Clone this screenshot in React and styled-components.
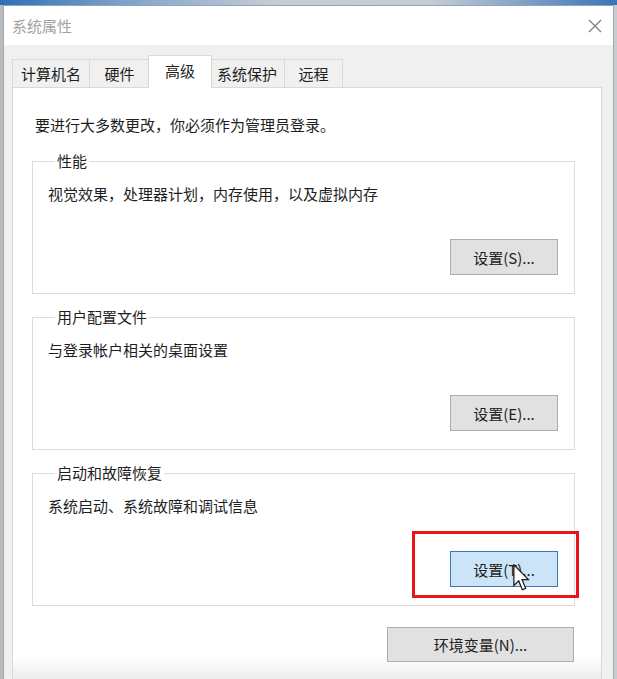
import React from "react";
import styled, {createGlobalStyle} from "styled-components";

const FONT = `"Noto Sans CJK SC", "Noto Sans", sans-serif`;

const Global = createGlobalStyle`
  html, body {
    margin: 0;
    padding: 0;
    overflow: hidden;
    background: #d6d6d6;
  }
  * { box-sizing: border-box; }
`;

const Screen = styled.div`
  width: 617px;
  height: 679px;
  padding: 5px 3px 0 3px;
  display: flex;
  background:
    linear-gradient(to right, #2f6fb5 0, #7fa2c8 20%, #c9cdd2 45%, #c7ccd2 70%, #3a74b8 100%) top / 100% 5px no-repeat,
    linear-gradient(to right, #b8bcc2 0 3px, #e4e4e4 3px, #e4e4e4 614px, #c8ccd2 614px);
  overflow: hidden;
`;

const Window = styled.div`
  flex: 1;
  display: flex;
  flex-direction: column;
  background: #f0f0f0;
  border-left: 1px solid #a8a8a8;
  border-right: 1px solid #a8a8a8;
  border-top: 1px solid #8aa6c6;
  font-family: ${FONT};
  color: #1e1e1e;
`;

const TitleBar = styled.div`
  height: 39px;
  background: #ffffff;
  display: flex;
  align-items: center;
  justify-content: space-between;
  padding: 0 11px 0 8px;
`;

const Title = styled.span`
  font-size: 15px;
  color: #a3a3a3;
`;

const Body = styled.div`
  flex: 1;
  display: flex;
  flex-direction: column;
  padding: 10px 11px 0 8px;
`;

const TabRow = styled.div`
  display: flex;
  align-items: flex-end;
  height: 33px;
  margin-bottom: -1px;
  position: relative;
  z-index: 1;
`;

const Tab = styled.div`
  height: ${p => (p.$active ? 33 : 29)}px;
  width: ${p => p.$w}px;
  margin: 0 ${p => (p.$active ? -2 : 0)}px;
  display: flex;
  justify-content: center;
  align-items: ${p => (p.$active ? "flex-start" : "center")};
  padding-top: ${p => (p.$active ? 5 : 0)}px;
  font-size: 15px;
  line-height: 20px;
  background: ${p => (p.$active ? "#ffffff" : "#f0f0f0")};
  border: 1px solid #d9d9d9;
  border-bottom: ${p => (p.$active ? "none" : "1px solid #d9d9d9")};
  border-left: ${p => (p.$first || p.$active ? "1px solid #d9d9d9" : "none")};
  position: relative;
  z-index: ${p => (p.$active ? 2 : 1)};
`;

const Panel = styled.div`
  flex: 1;
  display: flex;
  flex-direction: column;
  padding: 27px 26px 0 19px;
  border: 1px solid #d9d9d9;
  border-bottom: none;
  background: linear-gradient(to bottom, #ffffff 0, #ffffff calc(100% - 22px), #ececec 100%);
`;

const Intro = styled.div`
  font-size: 15px;
  line-height: 20px;
  padding-left: 3px;
  margin-bottom: 16px;
`;

const Groups = styled.div`
  display: flex;
  flex-direction: column;
  gap: 13px;
`;

const Group = styled.fieldset`
  margin: 0;
  min-width: 0;
  border: 1px solid #dcdcdc;
  padding: 13px 16px 18px 15px;
`;

const Legend = styled.legend`
  font-size: 15px;
  line-height: 20px;
  padding: 0 2px;
  margin-left: 7px;
`;

const Desc = styled.div`
  font-size: 15px;
  line-height: 20px;
`;

const ButtonRow = styled.div`
  display: flex;
  justify-content: flex-end;
  margin-top: ${p => p.$top || 35}px;
  margin-right: ${p => p.$right || 0}px;
`;

const ButtonWrap = styled.div`
  position: relative;
`;

const Button = styled.button`
  font-family: ${FONT};
  font-size: 15px;
  color: #1e1e1e;
  width: ${p => p.$w || 108}px;
  height: ${p => p.$h || 36}px;
  padding: 0;
  background: ${p => (p.$hot ? "#cce4f7" : "#e1e1e1")};
  border: 1px solid ${p => (p.$hot ? "#3b78b5" : "#adadad")};
`;

const Highlight = styled.div`
  position: absolute;
  top: -20px;
  bottom: -11px;
  left: -38px;
  right: -21px;
  border: 3px solid #e8141c;
  pointer-events: none;
`;

const Cursor = styled.svg`
  position: absolute;
  left: 63px;
  top: 13px;
`;

const tabs = [
  {label: "计算机名", w: 78},
  {label: "硬件", w: 60},
  {label: "高级", w: 64, active: true},
  {label: "系统保护", w: 75},
  {label: "远程", w: 58},
];

const CloseIcon = () => (
  <svg width="14" height="14" viewBox="0 0 14 14">
    <path d="M1 1 L13 13 M13 1 L1 13" stroke="#7a7a7a" strokeWidth="1.2" fill="none"/>
  </svg>
);

const groups = [
  {title: "性能", desc: "视觉效果，处理器计划，内存使用，以及虚拟内存", btn: "设置(S)..."},
  {title: "用户配置文件", desc: "与登录帐户相关的桌面设置", btn: "设置(E)..."},
  {title: "启动和故障恢复", desc: "系统启动、系统故障和调试信息", btn: "设置(T)...", hot: true},
];

export default function App() {
  return (
    <>
      <Global/>
      <Screen>
        <Window>
          <TitleBar>
            <Title>系统属性</Title>
            <CloseIcon/>
          </TitleBar>
          <Body>
            <TabRow>
              {tabs.map((t, i) => (
                <Tab key={t.label} $w={t.w} $active={t.active} $first={i === 0}>{t.label}</Tab>
              ))}
            </TabRow>
            <Panel>
              <Intro>要进行大多数更改，你必须作为管理员登录。</Intro>
              <Groups>
                {groups.map(g => (
                  <Group key={g.title}>
                    <Legend>{g.title}</Legend>
                    <Desc>{g.desc}</Desc>
                    <ButtonRow>
                      <ButtonWrap>
                        <Button $hot={g.hot}>{g.btn}</Button>
                        {g.hot && (
                          <>
                            <Highlight/>
                            <Cursor width="17" height="27" viewBox="0 0 12 19.5">
                              <path d="M0.5 0.5 L0.5 15.5 L4 12.2 L6.6 18.6 L9 17.6 L6.4 11.3 L11 11.3 Z"
                                    fill="#ffffff" stroke="#1a1a1a" strokeWidth="0.9" strokeLinejoin="miter"/>
                            </Cursor>
                          </>
                        )}
                      </ButtonWrap>
                    </ButtonRow>
                  </Group>
                ))}
              </Groups>
              <ButtonRow $top={21} $right={1}>
                <Button $w={187} $h={35}>环境变量(N)...</Button>
              </ButtonRow>
            </Panel>
          </Body>
        </Window>
      </Screen>
    </>
  );
}
